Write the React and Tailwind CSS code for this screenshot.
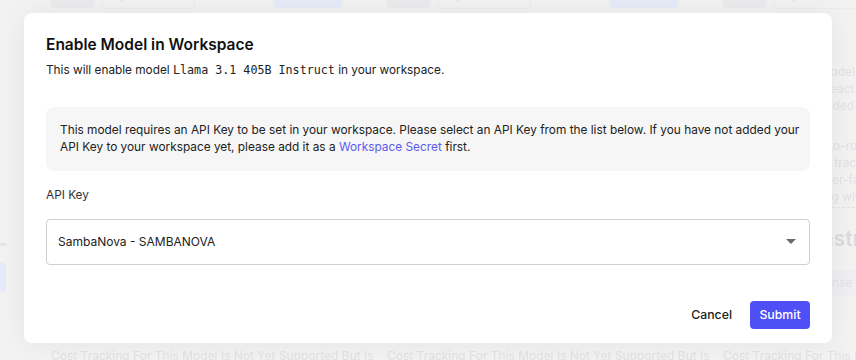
import React from 'react';

const descA = [
  "Meta's Llama 3.1 Model is the largest open model",
  'Works great with React and other frontend tools',
  'Can also be embedded into your own workflows',
];

const descB = [
  'Tool calling and auto-routing out of the box',
  'Fast streaming and tracing for every request',
  'Streaming with super-fast token generation',
  'Supports debugging with logs and traces',
];

const Badge = ({ children, tone }) => (
  <span
    className={`rounded px-2 py-[3px] text-[12px] font-medium ${
      tone === 'blue'
        ? 'bg-[#e7ebf8] text-[#d6ddf4]'
        : tone === 'gray'
        ? 'bg-[#ebebee] text-[#dcdce0]'
        : 'border border-[#ececef] text-[#dfdfe2]'
    }`}
  >
    {children}
  </span>
);

const ModelCard = () => (
  <div className="flex h-[360px] w-[323px] shrink-0 flex-col px-4 text-[#e1e1e4]">
    <div className="-mt-[15px] flex h-[22px] items-center gap-2">
      <Badge tone="gray">Chat</Badge>
      <Badge>Open Source</Badge>
      <div className="flex-1" />
      <Badge tone="blue">Available</Badge>
    </div>
    <div className="mt-[56px] whitespace-nowrap text-[12px] leading-[17px]">
      {descA.map((l) => (
        <p key={l}>{l}</p>
      ))}
    </div>
    <div className="mt-[23px] whitespace-nowrap text-[12px] leading-[17px]">
      {descB.map((l) => (
        <p key={l}>{l}</p>
      ))}
    </div>
    <div className="mt-[2px] border-t border-dashed border-[#e2e2e5]" />
    <div className="mt-[17px] whitespace-nowrap text-[21px] font-semibold leading-7 text-[#dadadd]">3.1 405B Instruct</div>
    <div className="mt-[17px] w-fit whitespace-nowrap rounded bg-[#efeff1] px-2 py-1 text-[12px] text-[#e3e3e6]">Open Source License</div>
    <div className="mt-auto mb-[-4px] whitespace-nowrap text-[12px] leading-[17px]">
      Cost Tracking For This Model Is Not Yet Supported But Is
    </div>
  </div>
);

export default function App() {
  return (
    <div
      className="relative h-[360px] w-[856px] overflow-hidden bg-[#f2f2f3]"
      style={{ fontFamily: 'Inter, "Noto Sans", sans-serif' }}
    >
      {/* faded page behind the dialog */}
      <div className="flex h-full blur-[0.6px]">
        <div className="flex w-[8px] shrink-0 flex-col">
          <div className="mt-[243px] h-[3px] w-[6px] bg-[#e6e6e8]" />
          <div className="mt-[16px] h-[30px] w-[6px] rounded-r bg-[#e5e9f8]" />
        </div>
        <div className="ml-[27px] flex gap-[13px]">
          {[0, 1, 2].map((c) => (
            <ModelCard key={c} />
          ))}
        </div>
      </div>

      {/* dialog */}
      <div className="absolute inset-0">
        <div className="absolute left-[24px] top-[13px] flex h-[330px] w-[808px] flex-col rounded-lg bg-white px-[22px] pb-[14px] pt-5 shadow-[0_0_28px_rgba(0,0,0,0.06)]">
          <h2 className="text-[15.5px] font-semibold leading-6 text-[#111]">Enable Model in Workspace</h2>
          <p className="mt-[3px] text-[11.8px] leading-5 text-[#222]">
            This will enable model{' '}
            <code
              className="text-[11.7px]"
              style={{ fontFamily: '"DejaVu Sans Mono", "Liberation Mono", monospace' }}
            >
              Llama 3.1 405B Instruct
            </code>{' '}
            in your workspace.
          </p>

          <div className="mt-[27px] rounded-lg bg-[#f6f6f6] py-[15px] pl-[14px] pr-[8px] text-[11.85px] leading-[17px] text-[#222]">
            This model requires an API Key to be set in your workspace. Please select an API Key from the list below. If you have not added your
            API Key to your workspace yet, please add it as a <span className="text-[#5b5bf0]">Workspace Secret</span> first.
          </div>

          <label className="mt-[14px] text-[11.8px] leading-5 text-[#333]">API Key</label>

          <div className="mt-[14px] flex h-[46px] items-center justify-between rounded border border-[#cfcfcf] bg-white pl-[11px] pr-[12px]">
            <span className="text-[12px] text-[#222]">SambaNova - SAMBANOVA</span>
            <svg width="10" height="6" viewBox="0 0 10 6" className="mr-[1px]">
              <path d="M0 0 L10 0 L5 5 Z" fill="#6b6b6b" />
            </svg>
          </div>

          <div className="mt-auto flex items-center justify-end gap-[18px]">
            <button className="text-[12.3px] font-medium text-[#222]">Cancel</button>
            <button className="h-[28px] w-[60px] rounded bg-[#4f4ff6] text-[12.3px] font-medium text-white">Submit</button>
          </div>
        </div>
      </div>
    </div>
  );
}
